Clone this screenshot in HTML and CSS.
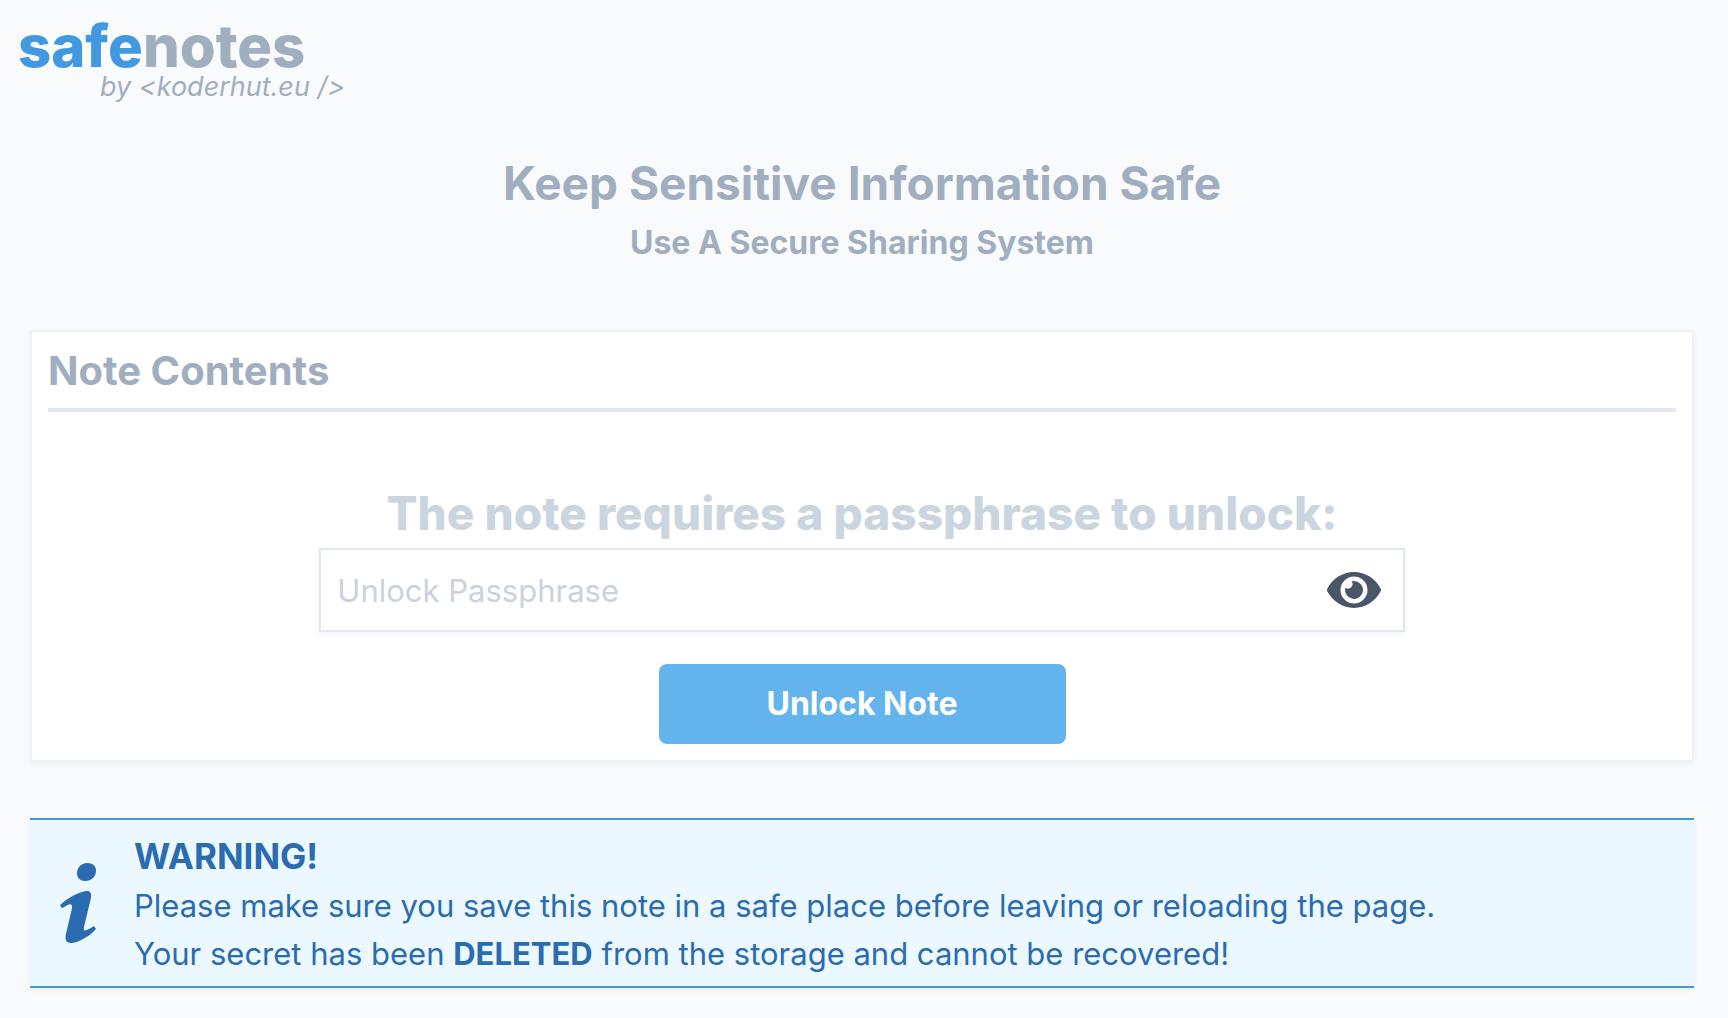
FILE: index.html
```html
<!DOCTYPE html>
<html lang="en">
<head>
<meta charset="utf-8">
<meta name="viewport" content="width=device-width, initial-scale=1">
<title>safenotes</title>
<link rel="stylesheet" href="styles.css">
</head>
<body>
<header class="brand">
  <h1 class="brand-name"><span class="brand-accent">safe</span>notes</h1>
  <p class="brand-by">by &lt;koderhut.eu /&gt;</p>
</header>
<main class="page">
  <div class="intro">
    <h2 class="intro-title">Keep Sensitive Information Safe</h2>
    <p class="intro-sub">Use A Secure Sharing System</p>
  </div>
  <section class="card">
    <h3 class="card-title">Note Contents</h3>
    <form class="unlock">
      <label class="unlock-label" for="passphrase">The note requires a passphrase to unlock:</label>
      <div class="field">
        <input class="field-input" id="passphrase" type="password" placeholder="Unlock Passphrase">
        <button class="field-toggle" type="button" aria-label="Show passphrase">
          <svg class="eye" viewBox="0 0 576 512" aria-hidden="true"><path fill="currentColor" d="M572.52 241.4C518.29 135.59 410.93 64 288 64S57.68 135.64 3.48 241.41a32.35 32.35 0 0 0 0 29.19C57.71 376.41 165.07 448 288 448s230.32-71.64 284.52-177.41a32.35 32.35 0 0 0 0-29.19zM288 400a144 144 0 1 1 144-144 143.93 143.93 0 0 1-144 144zm0-240a95.31 95.31 0 0 0-25.31 3.79 47.85 47.85 0 0 1-66.9 66.9A95.78 95.78 0 1 0 288 160z"/></svg>
        </button>
      </div>
      <button class="unlock-button" type="button">Unlock Note</button>
    </form>
  </section>
  <section class="notice">
    <svg class="notice-icon" viewBox="0 0 108 240" aria-hidden="true"><g fill="currentColor"><path d="M82 0C98 0 108 9 108 23C108 40 95 54 75 54C60 54 51 45 51 31C51 13 64 0 82 0Z"/><path d="M0 127C22 104 62 84 82 84C91 84 95 91 93 104L72 192C70 201 73 204 80 201C88 198 95 194 102 189L108 198C88 221 54 240 32 240C20 240 15 232 17 217L36 136C38 123 32 122 24 125L6 136Z"/></g></svg>
    <div class="notice-body">
      <p class="notice-title">WARNING!</p>
      <p class="notice-text">Please make sure you save this note in a safe place before leaving or reloading the page.</p>
      <p class="notice-text">Your secret has been <strong>DELETED</strong> from the storage and cannot be recovered!</p>
    </div>
  </section>
</main>
</body>
</html>
```
FILE: styles.css
```css
*, *::before, *::after { box-sizing: border-box; }
body {
  margin: 0;
  background: #f9fafc;
  color: #a0aec0;
  font-family: Inter, "Liberation Sans", sans-serif;
  font-size: 32px;
  line-height: 48px;
}
h1, h2, h3, p { margin: 0; }
button, input { font: inherit; }

.brand { padding: 18px 18px 0; }
.brand-name { font-size: 58px; line-height: 56px; font-weight: 800; }
.brand-accent { color: #4299e1; }
.brand-by { padding-left: 82px; font-size: 27px; line-height: 26px; font-style: italic; }

.page { padding: 52px 34px 30px 30px; }
.intro { text-align: center; margin-bottom: 58px; }
.intro-title { font-size: 46px; line-height: 62px; font-weight: 700; }
.intro-sub { font-size: 32px; line-height: 58px; font-weight: 700; }

.card {
  padding: 16px;
  background: #fff;
  border: 2px solid #edf2f7;
  box-shadow: 0 2px 6px rgba(0, 0, 0, .05);
}
.card-title {
  padding-bottom: 14px;
  border-bottom: 4px solid #e2e8f0;
  font-size: 40px;
  line-height: 46px;
  font-weight: 700;
}
.unlock { display: flex; flex-direction: column; align-items: center; padding-top: 66px; }
.unlock-label { color: #cbd5e0; font-size: 46px; line-height: 70px; font-weight: 800; }
.field {
  display: flex;
  align-items: center;
  width: 66.6667%;
  margin-bottom: 32px;
  border: 2px solid #e2e8f0;
  background: #fff;
  box-shadow: 0 2px 6px rgba(0, 0, 0, .05);
}
.field-input {
  flex: 1;
  min-width: 0;
  height: 80px;
  padding: 0 16px;
  border: 0;
  background: none;
  color: #4a5568;
  font-size: 31px;
}
.field-input::placeholder { color: #cbd2dd; opacity: 1; }
.field-toggle { display: flex; padding: 0 22px; border: 0; background: none; color: #4a5568; }
.eye { width: 54px; height: 48px; }
.unlock-button {
  width: 25%;
  height: 80px;
  border: 0;
  border-radius: 8px;
  background: #63b3ed;
  color: #fff;
  font-weight: 700;
}

.notice {
  display: flex;
  align-items: center;
  gap: 38px;
  margin-top: 56px;
  padding: 8px 30px;
  border: solid #4299e1;
  border-width: 2px 0;
  background: #ebf8ff;
  color: #2b6cb0;
  box-shadow: 0 2px 6px rgba(0, 0, 0, .05);
}
.notice-icon { flex: none; width: 36px; height: 80px; }
.notice-body { padding-top: 2px; }
.notice-title { font-size: 35px; line-height: 52px; font-weight: 700; }
.notice-text { font-size: 31px; }
```
